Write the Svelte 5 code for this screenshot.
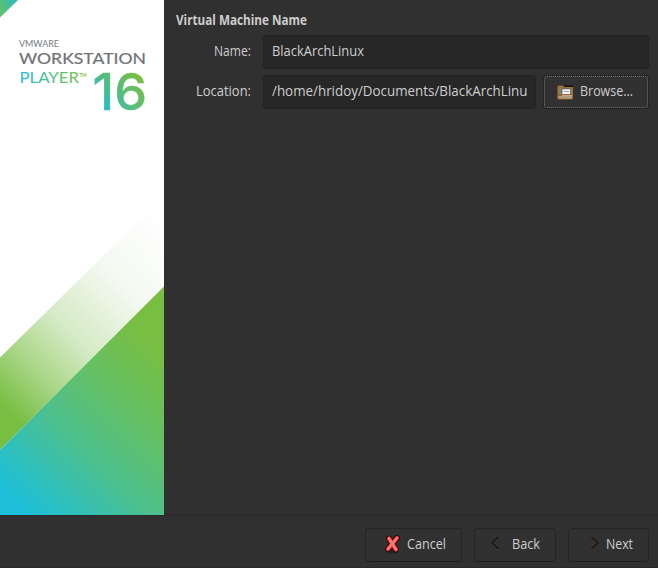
<script>
  const location = '/home/hridoy/Documents/BlackArchLinu';
</script>

{#snippet label(text, width, bold = false)}
  <svg class="label" class:bold {width} height="20">
    <text x="0" y="15" textLength={width} lengthAdjust="spacingAndGlyphs">{text}</text>
  </svg>
{/snippet}

<div class="window">
  <div class="body">
    <svg class="banner" width="164" height="515" viewBox="0 0 164 515">
      <defs>
        <linearGradient id="corner" gradientUnits="userSpaceOnUse" x1="0" y1="8" x2="17" y2="0">
          <stop offset="0" stop-color="#5fc172" /><stop offset="1" stop-color="#28bbc0" />
        </linearGradient>
        <linearGradient id="fade" gradientUnits="userSpaceOnUse" x1="10" y1="412" x2="178" y2="244">
          <stop offset="0" stop-color="#78be43" /><stop offset=".19" stop-color="#a7d584" />
          <stop offset=".41" stop-color="#d4eac4" /><stop offset=".71" stop-color="#f4f9f1" />
          <stop offset="1" stop-color="#fefefe" />
        </linearGradient>
        <linearGradient id="base" gradientUnits="userSpaceOnUse" x1="10" y1="495" x2="157.500" y2="347.500">
          <stop offset="0" stop-color="#1dbfd9" /><stop offset=".4" stop-color="#4cc08f" />
          <stop offset=".7" stop-color="#65c064" /><stop offset="1" stop-color="#78be43" />
        </linearGradient>
        <linearGradient id="player" gradientUnits="userSpaceOnUse" x1="20" y1="0" x2="86" y2="0">
          <stop offset="0" stop-color="#1dbbdc" /><stop offset=".55" stop-color="#59c47b" />
          <stop offset="1" stop-color="#7bc043" />
        </linearGradient>
        <linearGradient id="version" gradientUnits="userSpaceOnUse" x1="98" y1="110" x2="137" y2="75">
          <stop offset="0" stop-color="#22bcd2" /><stop offset=".5" stop-color="#52bd82" />
          <stop offset="1" stop-color="#78be43" />
        </linearGradient>
      </defs>
      <rect width="164" height="515" fill="#fff" />
      <path d="M0 0H18L0 17.5Z" fill="url(#corner)" />
      <path d="M0 357.500L164 196V287L0 450Z" fill="url(#fade)" />
      <path d="M0 450L164 286.500V515H0Z" fill="url(#base)" />
      <g class="brand">
        <text x="19" y="46.500" font-size="8.500" textLength="40" lengthAdjust="spacingAndGlyphs" fill="#77787b">VMWARE</text>
        <text x="19" y="64.300" font-size="15.700" font-weight="400" textLength="127" lengthAdjust="spacingAndGlyphs" fill="#717276" stroke="#717276" stroke-width=".2">WORKSTATION</text>
        <text x="19.500" y="83" font-size="14.500" textLength="59.500" lengthAdjust="spacingAndGlyphs" fill="url(#player)">PLAYER</text>
        <text x="79.500" y="76.500" font-size="5" font-weight="700" textLength="7" lengthAdjust="spacingAndGlyphs" fill="#7bc043">TM</text>
        <text class="number" x="92.500" y="109.500" font-size="51" font-weight="500" textLength="54.500" lengthAdjust="spacingAndGlyphs" fill="url(#version)" stroke="url(#version)" stroke-width=".4">16</text>
      </g>
    </svg>

    <main>
      <h1>{@render label('Virtual Machine Name', 131, true)}</h1>
      <div class="row">
        <span class="caption">{@render label('Name:', 37)}</span>
        <div class="field">{@render label('BlackArchLinux', 92)}</div>
      </div>
      <div class="row">
        <span class="caption">{@render label('Location:', 55)}</span>
        <div class="field">{@render label(location, 255.5)}</div>
        <button class="browse" aria-label="Browse...">
          <svg class="icon folder" width="17" height="16" viewBox="0 0 17 16">
            <path d="M1 1.500H16V14H1Z" fill="#17130f" />
            <path d="M1 2H6L7.500 3.500H15.500V14H1Z" fill="#8b7355" stroke="#a27334" />
            <path d="M2 4.500H15V10H2Z" fill="#8c7c68" />
            <path d="M5 5H13.500V11H5Z" fill="#fafafa" stroke="#444" stroke-width=".6" />
            <path d="M6.500 7.500H12" stroke="#999" />
            <path d="M1 11.500H5L6 10.500H15.500V15H1Z" fill="#c4ad8c" stroke="#95652a" />
            <path d="M1.500 13H15" stroke="#9f8b72" />
          </svg>
          {@render label('Browse...', 53)}
        </button>
      </div>
    </main>
  </div>

  <footer>
    <button class="cancel" aria-label="Cancel">
      <svg class="icon" width="18" height="20" viewBox="0 0 18 20">
        <ellipse cx="8" cy="17.500" rx="6" ry="2" fill="#1d1d1d" opacity=".65" />
        <path d="M5 4.500L12 15.500M13 4L4 15" stroke="#160606" stroke-width="5.800" stroke-linecap="round" />
        <path d="M5 4.500L12 15.500M13 4L4 15" stroke="#dc2928" stroke-width="4.300" stroke-linecap="round" />
        <path d="M5 4.500L12 15.500M13 4L4 15" stroke="#ff7777" stroke-width="2.700" stroke-linecap="round" />
      </svg>
      {@render label('Cancel', 39)}
    </button>
    <button class="back" aria-label="Back">
      <svg class="icon" width="10" height="16" viewBox="0 0 10 16">
        <path d="M8.500 2L2 8L8.500 14" fill="none" stroke="#494540" stroke-width="1" transform="translate(0 1)" />
        <path d="M8.500 2L2 8L8.500 14" fill="none" stroke="#161616" stroke-width="1.400" />
      </svg>
      {@render label('Back', 28)}
    </button>
    <button class="next" aria-label="Next">
      <svg class="icon" width="10" height="16" viewBox="0 0 10 16">
        <path d="M1.500 2L8 8L1.500 14" fill="none" stroke="#494039" stroke-width="1" transform="translate(0 1)" />
        <path d="M1.500 2L8 8L1.500 14" fill="none" stroke="#161413" stroke-width="1.400" />
      </svg>
      {@render label('Next', 27)}
    </button>
  </footer>
</div>

<style>
  :global(body) { margin: 0; background: #303030; }
  .window {
    width: 658px;
    height: 568px;
    box-sizing: border-box;
    display: flex;
    flex-direction: column;
    overflow: hidden;
    background: #303030;
    border-bottom: 1px solid #292929;
    font-family: "Open Sans", "Noto Sans", sans-serif;
  }
  .body { display: flex; height: 515px; flex: none; }
  svg { display: block; flex: none; }
  .brand { font-family: Lato, sans-serif; }
  .number { font-family: Inter, sans-serif; }
  .label { overflow: visible; font-size: 14.3px; fill: #cdcdcd; }
  .bold { font-weight: 700; }
  main { flex: 1; min-width: 0; padding: 10px 9px 0 12px; }
  h1 { margin: 0 0 5px; height: 20px; }
  .row { display: flex; height: 34px; margin-bottom: 6px; }
  .caption { flex: none; width: 75px; margin-right: 12px; padding-top: 6px; display: flex; justify-content: flex-end; }
  .field, button {
    box-sizing: border-box;
    border: 1px solid #222;
    border-radius: 4px;
  }
  .field { flex: 1; min-width: 0; background: #272727; padding: 5px 8px; }
  button {
    display: flex;
    flex: none;
    align-items: flex-start;
    height: 34px;
    background: #313131;
    border-color: #252525;
    border-bottom-color: #1e1e1e;
    font: inherit;
  }
  .browse {
    width: 106px;
    margin-left: 7px;
    padding: 5px 0 0 13px;
    outline: 1px dotted #777;
    outline-offset: -2px;
  }
  .folder { margin: 3px 6px 0 0; }
  footer {
    box-sizing: border-box;
    flex: 1;
    display: flex;
    gap: 12px;
    justify-content: flex-end;
    padding: 12px 9px 0 0;
    border-top: 1px solid #292929;
  }
  .cancel { width: 97px; padding: 5px 0 0 18px; }
  .cancel .icon { margin-right: 5px; }
  .back { width: 82px; padding: 5px 0 0 15px; }
  .back .icon { margin: 1px 12px 0 0; }
  .next { width: 81px; padding: 5px 0 0 21px; }
  .next .icon { margin: 1px 6px 0 0; }
</style>
